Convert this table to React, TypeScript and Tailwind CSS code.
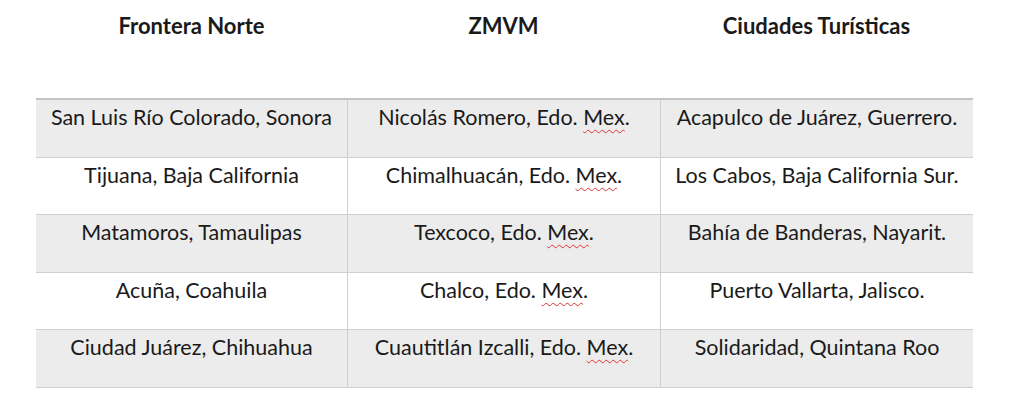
import React from 'react';

type Cell = { text: string; squiggle?: boolean };

const headers = ['Frontera Norte', 'ZMVM', 'Ciudades Turísticas'];

const rows: Cell[][] = [
  [{ text: 'San Luis Río Colorado, Sonora' }, { text: 'Nicolás Romero, Edo. ', squiggle: true }, { text: 'Acapulco de Juárez, Guerrero.' }],
  [{ text: 'Tijuana, Baja California' }, { text: 'Chimalhuacán, Edo. ', squiggle: true }, { text: 'Los Cabos, Baja California Sur.' }],
  [{ text: 'Matamoros, Tamaulipas' }, { text: 'Texcoco, Edo. ', squiggle: true }, { text: 'Bahía de Banderas, Nayarit.' }],
  [{ text: 'Acuña, Coahuila' }, { text: 'Chalco, Edo. ', squiggle: true }, { text: 'Puerto Vallarta, Jalisco.' }],
  [{ text: 'Ciudad Juárez, Chihuahua' }, { text: 'Cuautitlán Izcalli, Edo. ', squiggle: true }, { text: 'Solidaridad, Quintana Roo' }],
];

const CellText: React.FC<{ cell: Cell }> = ({ cell }) => (
  <span>
    {cell.text}
    {cell.squiggle && (
      <>
        <span className="underline decoration-wavy decoration-[#d33] decoration-1 underline-offset-[4px]">Mex</span>.
      </>
    )}
  </span>
);

export default function App() {
  return (
    <div className="w-[1024px] h-[413px] bg-white text-[#1a1a1a] font-['Lato','Open_Sans',sans-serif]">
      <div className="ml-[36px] w-[937px]">
        <div className="grid grid-cols-[311px_313px_313px] h-[98px] pt-[13px]">
          {headers.map((h) => (
            <div key={h} className="text-center text-[22px] font-bold leading-[26px]">
              {h}
            </div>
          ))}
        </div>
        <div className="border-t-2 border-[#c4c4c4]">
          {rows.map((row, i) => (
            <div
              key={i}
              className={`grid grid-cols-[311px_313px_313px] h-[57.5px] border-b border-[#cfcfcf] ${
                i % 2 === 0 ? 'bg-[#ececec]' : 'bg-white'
              }`}
            >
              {row.map((cell, j) => (
                <div
                  key={j}
                  className={`text-center text-[21.5px] leading-[26px] pt-[4px] ${j > 0 ? 'border-l border-[#cfcfcf]' : ''}`}
                >
                  <CellText cell={cell} />
                </div>
              ))}
            </div>
          ))}
        </div>
      </div>
    </div>
  );
}
